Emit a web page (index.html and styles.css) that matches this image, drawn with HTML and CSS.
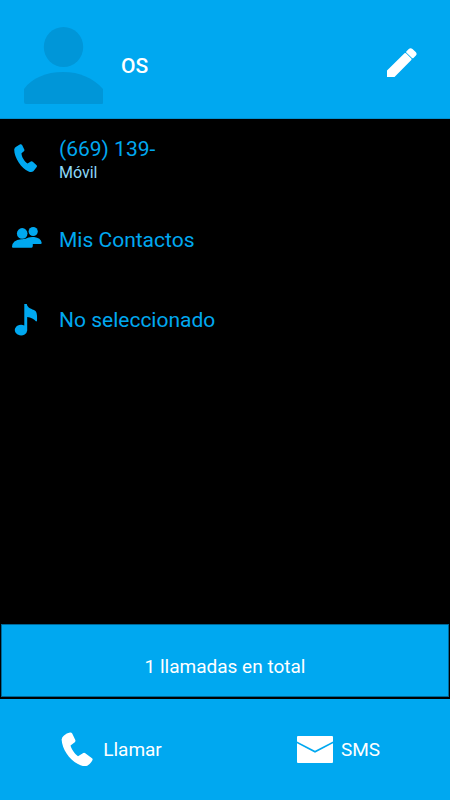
FILE: index.html
```html
<!DOCTYPE html>
<html lang="es">
<head>
<meta charset="utf-8">
<meta name="viewport" content="width=device-width, initial-scale=1">
<title>Contacto</title>
<link rel="stylesheet" href="styles.css">
</head>
<body>
<header class="header">
  <svg class="avatar" viewBox="0 0 80 78" aria-hidden="true">
    <ellipse cx="39.500" cy="20" rx="19.700" ry="20"/>
    <path d="M0 62C8 51 22 45 39 45S69 51 79 62V76Q79 77 78 77H2Q0 77 0 75Z"/>
  </svg>
  <h1 class="name">OS</h1>
  <button class="edit" type="button" aria-label="Editar">
    <svg width="30" height="30" viewBox="0 0 30 30" aria-hidden="true">
      <path d="M0 22.500L17.500 5.200Q18.200 4.700 19 5.300L24.300 10.600Q24.900 11.300 24.300 12L7.500 29H0ZM19.300 3.400L21.800.9Q23.500-.6 25.500.9L28.700 4.100Q30.400 5.800 28.900 7.500L26.500 9.900Q25.700 10.500 25 9.900L19.500 4.700Q18.900 4.100 19.300 3.400Z"/>
    </svg>
  </button>
</header>
<main class="main">
  <ul class="details">
    <li class="row">
      <svg class="icon" viewBox="0 0 32 32" aria-hidden="true">
        <path d="M4.500 2.500L8.200.3Q9.300-.1 10.100 1L12.300 5.500Q12.700 6.500 11.900 7.200L9.500 9.200C9.500 13 12.700 17.500 15.600 19.500L18.800 17.500Q19.800 17 20.800 17.800L24.600 21.200Q25.300 22 24.700 23L21.400 27.200Q19.500 28.700 16.600 27.500C9.500 24.700 2.200 13.500 2.200 5.500Q2.400 3.500 4.500 2.500Z"/>
      </svg>
      <div>
        <div class="value">(669) 139-</div>
        <div class="kind">Móvil</div>
      </div>
    </li>
    <li class="row">
      <svg class="icon" viewBox="0 0 32 32" aria-hidden="true">
        <circle cx="10.200" cy="9.400" r="5.300"/>
        <circle cx="21.200" cy="7.500" r="4.600"/>
        <path d="M0 22.700Q.3 16 9.300 15.200Q13.500 15.400 16.500 13.600Q18.500 12.700 22 13Q28.800 13.800 29.700 18.700Q29.800 20 28.500 20H20.800V22Q20.800 23.700 19.500 23.700H1Q0 23.700 0 22.700Z"/>
      </svg>
      <div class="value">Mis Contactos</div>
    </li>
    <li class="row">
      <svg class="icon" viewBox="0 0 32 32" aria-hidden="true">
        <path d="M12.300 0H14.800C15.500 4.500 19.500 4.300 23.500 7Q25.400 8.500 25 17L24.100 17.500C22 14.500 19 13.700 15.200 13V26.500A6.200 5.300 0 1 1 12.300 21.600Z"/>
      </svg>
      <div class="value">No seleccionado</div>
    </li>
  </ul>
  <button class="total" type="button">1 llamadas en total</button>
</main>
<footer class="actions">
  <button class="action" type="button">
    <svg width="34" height="36" viewBox="0 0 34 36" aria-hidden="true">
      <path d="M3 3.500Q5.500 1.200 9 .5Q10.500.3 11.200 1.500L14.300 8Q14.800 9.300 13.800 10.200L9.500 13.500C10.500 17.500 14 22 17 24.200L22.300 21Q23.200 20.300 24.300 21.200L31 26.200Q32 27 31.400 28.200Q29.500 32 26.300 33.700Q23.500 34.700 19.500 33.200C9.500 29.500 1.200 18 .6 7.500Q.9 5 3 3.500Z"/>
    </svg>
    <span>Llamar</span>
  </button>
  <button class="action" type="button">
    <svg width="36" height="28" viewBox="0 0 36 28" aria-hidden="true">
      <path d="M0 1Q0 0 1 0H35Q36 0 36 1V5.400L18 14.800L0 5.400ZM0 7.200L18 16.700L36 7.200V26Q36 27 35 27H1Q0 27 0 26Z"/>
    </svg>
    <span>SMS</span>
  </button>
</footer>
</body>
</html>
```
FILE: styles.css
```css
* {
  box-sizing: border-box;
}

body {
  margin: 0;
  min-height: 100vh;
  display: flex;
  flex-direction: column;
  background: #000;
  color: #fff;
  font-family: Roboto, sans-serif;
}

svg {
  display: block;
  flex: none;
  fill: currentColor;
}

button {
  padding: 0;
  border: 0;
  background: none;
  color: inherit;
  font: inherit;
  cursor: pointer;
}

.header {
  display: flex;
  align-items: center;
  padding: 27px 33px 13px 24px;
  background: #00a8f0;
  border-bottom: 1px solid #0090d0;
}

.avatar {
  width: 80px;
  height: 78px;
  color: #0096d8;
}

.name {
  flex: 1;
  margin: 0 0 0 17px;
  font-size: 21px;
  line-height: 24px;
  font-weight: 500;
}

.edit {
  padding-bottom: 6px;
}

.main {
  flex: 1;
  display: flex;
  flex-direction: column;
}

.details {
  flex: 1;
  margin: 0;
  padding: 1px 0 0;
  list-style: none;
}

.row {
  display: flex;
  align-items: center;
  gap: 15px;
  height: 80px;
  padding-left: 12px;
  color: #00a8f0;
}

.icon {
  width: 32px;
  height: 32px;
}

.value {
  font-size: 21px;
  line-height: 26px;
}

.kind {
  color: #8cd8f8;
  font-size: 16px;
  line-height: 22px;
}

.total {
  height: 73px;
  margin: 0 1px 2px;
  padding-top: 12px;
  border: 1px solid #006898;
  background: #00a8f0;
  font-size: 19px;
}

.actions {
  display: flex;
  gap: 4px;
  height: 101px;
  background: #00a8f0;
}

.action {
  flex: 1;
  display: flex;
  align-items: center;
  justify-content: center;
  gap: 8px;
  font-size: 19px;
}
```
